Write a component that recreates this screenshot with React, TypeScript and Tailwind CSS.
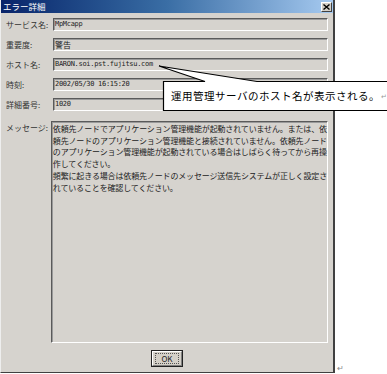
import React from "react";

const jp = { fontFamily: '"Noto Sans CJK JP", "Noto Sans", sans-serif' };

const fields = [
  { label: "サービス名:", value: "MpMcapp", mono: true },
  { label: "重要度:", value: "警告", mono: false },
  { label: "ホスト名:", value: "BARON.soi.pst.fujitsu.com", mono: true },
  { label: "時刻:", value: "2002/05/30 16:15:20", mono: true },
  { label: "詳細番号:", value: "1020", mono: true },
];

const message = [
  "依頼先ノードでアプリケーション管理機能が起動されていません。または、依",
  "頼先ノードのアプリケーション管理機能と接続されていません。依頼先ノード",
  "のアプリケーション管理機能が起動されている場合はしばらく待ってから再操",
  "作してください。",
  "頻繁に起きる場合は依頼先ノードのメッセージ送信先システムが正しく設定さ",
  "れていることを確認してください。",
];

function Field({ value, mono }: { value: string; mono: boolean }) {
  return (
    <div className="flex h-[13px] flex-1 items-center border-t border-l border-t-[#5a5a5a] border-l-[#5a5a5a] border-b border-r border-b-white border-r-white bg-[#d6d3ce] pl-[1px] shadow-[inset_1px_1px_0_#9a9a9a]">
      <span
        className={
          mono
            ? "text-[7px] leading-none tracking-[-0.3px] text-[#222]"
            : "text-[8px] leading-none text-[#222]"
        }
        style={mono ? { fontFamily: '"DejaVu Sans Mono", monospace' } : jp}
      >
        {value}
      </span>
    </div>
  );
}

export default function App() {
  return (
    <div className="relative h-[374px] w-[387px] overflow-hidden bg-white" style={jp}>
      <div className="flex h-[373px] w-[335px] flex-col border-l border-l-[#eeeeee] border-r-2 border-r-[#404040] border-b border-b-[#404040] bg-[#d6d3ce]">
        {/* title bar */}
        <div className="flex h-[13px] items-center justify-between bg-gradient-to-r from-[#0a246a] via-[#3a6ea5] to-[#a6caf0] pl-[2px] pr-[1px]">
          <span className="text-[8.5px] leading-none text-white">エラー詳細</span>
          <div className="flex h-[10px] w-[11px] items-center justify-center border border-t-white border-l-white border-b-[#404040] border-r-[#404040] bg-[#d4d0c8]">
            <svg width="7" height="6" viewBox="0 0 7 6">
              <path d="M0.5 0.5 L6.5 5.5 M6.5 0.5 L0.5 5.5" stroke="#000" strokeWidth="1.4" />
            </svg>
          </div>
        </div>

        {/* body */}
        <div className="flex flex-1 flex-col px-[5px] pt-[5px] pb-[5px]">
          <div className="flex flex-col gap-[7px]">
            {fields.map((f) => (
              <div key={f.label} className="flex items-center">
                <span className="w-[47px] text-[8px] leading-none text-[#333]">{f.label}</span>
                <Field value={f.value} mono={f.mono} />
              </div>
            ))}
          </div>

          <div className="mt-[10px] flex">
            <span className="w-[47px] pt-[1px] text-[8px] leading-[11.7px] text-[#333]">メッセージ:</span>
            <div className="h-[222px] flex-1 border-t border-l border-t-[#5a5a5a] border-l-[#5a5a5a] border-b border-r border-b-white border-r-white pl-[1px] pt-[1px] shadow-[inset_1px_1px_0_#9a9a9a]">
              {message.map((line, i) => (
                <div
                  key={i}
                  className="whitespace-nowrap text-[8px] leading-[11.7px] tracking-[-0.15px] text-[#222]"
                >
                  {line}
                </div>
              ))}
            </div>
          </div>

          <div className="mt-[7px] flex justify-center">
            <button className="flex h-[17px] w-[32px] items-center justify-center border border-[#222] bg-[#d4d0c8] p-0">
              <span className="flex h-full w-full items-center justify-center border border-t-white border-l-white border-b-[#808080] border-r-[#808080]">
                <span className="border border-dotted border-[#555] px-[5px] text-[8px] leading-[9px] text-[#222]">
                  OK
                </span>
              </span>
            </button>
          </div>
        </div>
      </div>

      {/* return mark after dialog */}
      <span className="absolute left-[337px] top-[364px] text-[8px] leading-none text-[#888]">↵</span>

      {/* callout */}
      <svg className="absolute left-0 top-0" width="387" height="374">
        <path
          d="M163.5 81.5 L205 81.5 L159 66 L257 81.5 L390 81.5 L390 110.5 L163.5 110.5 Z"
          fill="#fff"
          stroke="#000"
          strokeWidth="1.2"
        />
      </svg>
      <div className="absolute left-[171px] top-[88px] flex items-center whitespace-nowrap">
        <span className="text-[10.5px] leading-[16px] tracking-[0.5px] text-black">
          運用管理サーバのホスト名が表示される。
        </span>
        <span className="ml-[1px] text-[7px] leading-none text-[#999]">↵</span>
      </div>
    </div>
  );
}
